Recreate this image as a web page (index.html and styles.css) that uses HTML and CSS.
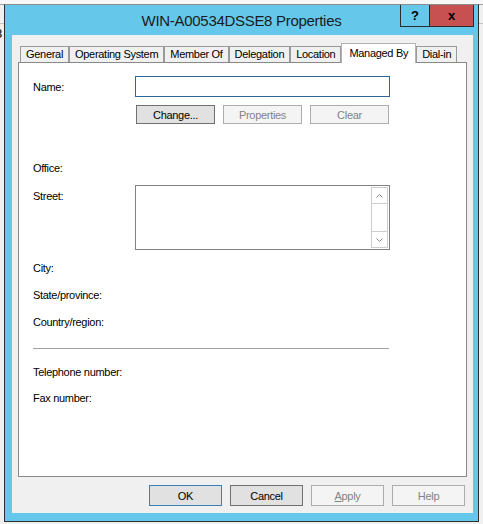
FILE: index.html
```html
<!DOCTYPE html>
<html lang="en">
<head>
<meta charset="utf-8">
<title>WIN-A00534DSSE8 Properties</title>
<link rel="stylesheet" href="styles.css">
</head>
<body>
  <div class="edge"><span>8</span></div>
  <div class="window">
    <div class="titlebar">
      <div class="title">WIN-A00534DSSE8 Properties</div>
      <div class="caption-buttons">
        <div class="cap-btn cap-help">?</div>
        <div class="cap-btn cap-close">x</div>
      </div>
    </div>
    <div class="panel">
      <div class="tabs">
        <div class="tab">General</div>
        <div class="tab">Operating System</div>
        <div class="tab">Member Of</div>
        <div class="tab">Delegation</div>
        <div class="tab">Location</div>
        <div class="tab tab-active">Managed By</div>
        <div class="tab">Dial-in</div>
      </div>
      <div class="page">
        <div class="row">
          <div class="label">Name:</div>
          <div class="textbox"></div>
        </div>
        <div class="btn-row">
          <button class="btn btn-normal">Change...</button>
          <button class="btn">Properties</button>
          <button class="btn">Clear</button>
        </div>
        <div class="field office">Office:</div>
        <div class="row street-row">
          <div class="label street-label">Street:</div>
          <div class="memo">
            <div class="scrollbar">
              <div class="sb-up">
                <svg width="7" height="4" viewBox="0 0 7 4"><polyline points="0.5,3.5 3.5,0.5 6.5,3.5" fill="none" stroke="#8a8a8a" stroke-width="1"/></svg>
              </div>
              <div class="sb-track"></div>
              <div class="sb-down">
                <svg width="7" height="4" viewBox="0 0 7 4"><polyline points="0.5,0.5 3.5,3.5 6.5,0.5" fill="none" stroke="#8a8a8a" stroke-width="1"/></svg>
              </div>
            </div>
          </div>
        </div>
        <div class="field city">City:</div>
        <div class="field state">State/province:</div>
        <div class="field country">Country/region:</div>
        <div class="separator"></div>
        <div class="field phone">Telephone number:</div>
        <div class="field fax">Fax number:</div>
      </div>
      <div class="footer">
        <button class="fbtn fbtn-default">OK</button>
        <button class="fbtn fbtn-normal">Cancel</button>
        <button class="fbtn"><u>A</u>pply</button>
        <button class="fbtn">Help</button>
      </div>
    </div>
  </div>
</body>
</html>
```
FILE: styles.css
```css
* {
  box-sizing: border-box;
}

html,
body {
  margin: 0;
  padding: 0;
}

body {
  width: 483px;
  height: 524px;
  overflow: hidden;
  display: flex;
  align-items: flex-start;
  font-family: "Liberation Sans", Arial, sans-serif;
  font-size: 11px;
  letter-spacing: -0.3px;
  color: #000;
  background: linear-gradient(to bottom,
      #f7f7f7 0, #f7f7f7 4px,
      #a3a3a3 4px, #a3a3a3 5px,
      #f0f0f0 5px, #f0f0f0 23px,
      #c4c4c4 23px, #c4c4c4 24px,
      #f0f0f0 24px);
}

/* background window peeking out on the left */
.edge {
  width: 4px;
  flex: none;
  overflow: hidden;
  padding-top: 26px;
}

.edge span {
  display: block;
  width: 8px;
  margin-left: -5px;
  font-size: 13px;
  line-height: 15px;
  letter-spacing: 0;
}

/* dialog window */
.window {
  flex: none;
  width: 475px;
  height: 518px;
  margin-top: 4px;
  background: #65c8ea;
  border: 1px solid #2e2e2e;
  border-top-color: #8c8c8c;
  display: flex;
  flex-direction: column;
}

.titlebar {
  flex: none;
  height: 30px;
  display: grid;
  grid-template-columns: 1fr auto 1fr;
  align-items: start;
}

.title {
  grid-column: 2;
  font-size: 15px;
  letter-spacing: -0.3px;
  line-height: 28px;
  padding-top: 2px;
  color: #1b1b1b;
  white-space: nowrap;
}

.caption-buttons {
  grid-column: 3;
  justify-self: end;
  display: flex;
  margin-right: 4px;
}

.cap-btn {
  height: 22px;
  border: 1px solid #2b2b2b;
  border-top: 0;
  display: flex;
  align-items: center;
  justify-content: center;
  font-weight: bold;
  font-size: 13px;
  letter-spacing: 0;
  color: #000;
}

.cap-help {
  width: 29px;
  border-right: 0;
}

.cap-close {
  width: 45px;
  background: #c75050;
  padding-bottom: 1px;
}

/* client area */
.panel {
  flex: none;
  height: 478px;
  margin: 0 5px 0 7px;
  background: #f0f0f0;
  padding: 8px 7px 0 6px;
  display: flex;
  flex-direction: column;
}

.tabs {
  display: flex;
  align-items: flex-end;
  height: 19px;
  margin-left: 2px;
  position: relative;
  z-index: 1;
}

.tab {
  height: 16px;
  border: 1px solid #9a9a9a;
  border-bottom: 0;
  background: #f0f0f0;
  padding: 0 5px;
  line-height: 15px;
  white-space: nowrap;
}

.tab-active {
  height: 20px;
  margin-bottom: -1px;
  background: #fff;
  border-color: #b4b4b4;
  padding: 2px 7px 0;
  line-height: 14px;
}

.page {
  width: 449px;
  height: 415px;
  background: #fff;
  border: 1px solid #898989;
  padding: 13px 0 0 14px;
  display: flex;
  flex-direction: column;
}

.row {
  display: flex;
  align-items: center;
}

.label {
  width: 102px;
  flex: none;
  line-height: 14px;
  white-space: nowrap;
}

.textbox {
  width: 255px;
  height: 21px;
  border: 1px solid #31659a;
  background: #fff;
}

.btn-row {
  display: flex;
  gap: 8px;
  margin: 8px 0 0 103px;
}

.btn,
.fbtn {
  font: inherit;
  letter-spacing: inherit;
  margin: 0;
  padding: 0;
  display: flex;
  align-items: center;
  justify-content: center;
  line-height: 14px;
  background: #f4f4f4;
  border: 1px solid #adadad;
  color: #838383;
  border-radius: 0;
}

.btn {
  width: 79px;
  height: 19px;
}

.btn-normal {
  background: #e1e1e1;
  border-color: #707070;
  color: #000;
}

.field {
  line-height: 14px;
  white-space: nowrap;
}

.office {
  margin-top: 37px;
}

.street-row {
  align-items: flex-start;
  margin-top: 10px;
}

.street-label {
  padding-top: 4px;
}

.memo {
  width: 255px;
  height: 65px;
  border: 1px solid #828282;
  padding: 1px;
  display: flex;
  justify-content: flex-end;
  background: #fff;
}

.scrollbar {
  width: 17px;
  border: 1px solid #cdcdcd;
  display: flex;
  flex-direction: column;
}

.sb-up,
.sb-down {
  height: 16px;
  flex: none;
  display: flex;
  align-items: center;
  justify-content: center;
}

.sb-up {
  border-bottom: 1px solid #cdcdcd;
}

.sb-down {
  border-top: 1px solid #cdcdcd;
}

.sb-track {
  flex: 1;
}

.city {
  margin-top: 11px;
}

.state,
.country {
  margin-top: 13px;
}

.separator {
  width: 356px;
  height: 1px;
  margin-top: 19px;
  background: #a0a0a0;
}

.phone {
  margin-top: 16px;
}

.fax {
  margin-top: 12px;
}

.footer {
  display: flex;
  justify-content: flex-end;
  gap: 8px;
  margin-top: 8px;
  padding-right: 1px;
}

.fbtn {
  width: 73px;
  height: 21px;
}

.fbtn-default {
  background: #e1e1e1;
  border-color: #3c7fb1;
  color: #000;
}

.fbtn-normal {
  background: #e1e1e1;
  border-color: #707070;
  color: #000;
}

.fbtn u {
  text-decoration: underline;
}
```
